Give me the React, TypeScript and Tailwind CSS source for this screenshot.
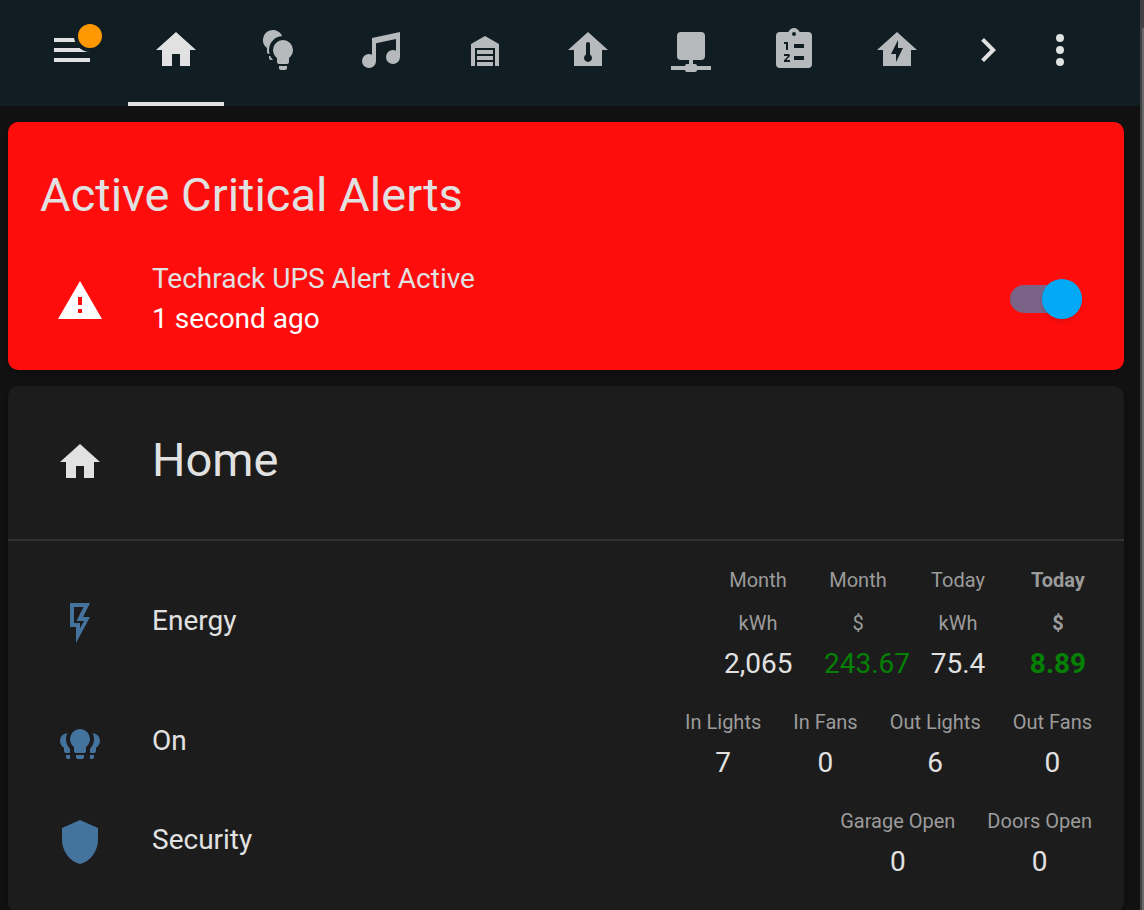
import { useState } from "react";

const icons = {
  menu: "M3,6H21V8H3V6M3,11H21V13H3V11M3,16H21V18H3V16Z",
  home: "M10,20V14H14V20H19V12H22L12,3L2,12H5V20H10Z",
  bulbs:
    "M13.59,5.01A7,7 0 0,0 7,12C7,12.7 7.1,13.4 7.3,14H7C6.4,14 6,13.6 6,13V11A5,5 0 0,1 9,2C11,2 12.8,3.2 13.59,5.01ZM7,15H7.6C8,15.9 8.5,16.4 9,17H8A1,1 0 0,1 7,16ZM14,7A5,5 0 0,1 19,12C19,13.64 18.2,15.1 17,16V18A1,1 0 0,1 16,19H12A1,1 0 0,1 11,18V16C9.8,15.1 9,13.6 9,12A5,5 0 0,1 14,7ZM16,21V20H12V21A1,1 0 0,0 13,22H15A1,1 0 0,0 16,21Z",
  music:
    "M21,3V15.5A3.5,3.5 0 0,1 17.5,19A3.5,3.5 0 0,1 14,15.5A3.5,3.5 0 0,1 17.5,12C18.04,12 18.55,12.12 19,12.34V6.47L9,8.6V17.5A3.5,3.5 0 0,1 5.5,21A3.5,3.5 0 0,1 2,17.5A3.5,3.5 0 0,1 5.5,14C6.04,14 6.55,14.12 7,14.34V6L21,3Z",
  garage:
    "M19,20H17V11H7V20H5V9L12,5L19,9V20M8,12H16V14H8V12M8,15H16V17H8V15M16,18V20H8V18H16Z",
  climate:
    "M12,3L2,12H5V20H19V12H22L12,3ZM12,8A1,1 0 0,1 13,9V14.27A2,2 0 1,1 11,14.27V9A1,1 0 0,1 12,8Z",
  network:
    "M17,3A2,2 0 0,1 19,5V15A2,2 0 0,1 17,17H13V19H14A1,1 0 0,1 15,20H22V22H15A1,1 0 0,1 14,23H10A1,1 0 0,1 9,22H2V20H9A1,1 0 0,1 10,19H11V17H7A2,2 0 0,1 5,15V5A2,2 0 0,1 7,3H17Z",
  clipboard:
    "M19,3H14.82C14.4,1.84 13.3,1 12,1C10.7,1 9.6,1.84 9.18,3H5A2,2 0 0,0 3,5V19A2,2 0 0,0 5,21H19A2,2 0 0,0 21,19V5A2,2 0 0,0 19,3ZM12,3A1,1 0 0,1 13,4A1,1 0 0,1 12,5A1,1 0 0,1 11,4A1,1 0 0,1 12,3ZM7,8H9V12H8V9H7V8ZM10,17V18H7V17.08L9,15H7V14H9.25A0.75,0.75 0 0,1 10,14.75C10,14.95 9.92,15.14 9.79,15.27L8.12,17H10ZM12,9H17V11H12ZM12,15H17V17H12Z",
  power: "M12,3L2,12H5V20H19V12H22L12,3ZM11.5,18V14H9L12.5,7V11H15L11.5,18Z",
  chevron: "M8.59,16.58L13.17,12L8.59,7.41L10,6L16,12L10,18L8.59,16.58Z",
  dots: "M12,16A2,2 0 0,1 14,18A2,2 0 0,1 12,20A2,2 0 0,1 10,18A2,2 0 0,1 12,16M12,10A2,2 0 0,1 14,12A2,2 0 0,1 12,14A2,2 0 0,1 10,12A2,2 0 0,1 12,10M12,4A2,2 0 0,1 14,6A2,2 0 0,1 12,8A2,2 0 0,1 10,6A2,2 0 0,1 12,4Z",
  alert: "M13,14H11V10H13M13,18H11V16H13M1,21H23L12,2L1,21Z",
  flash:
    "M7,2H17L13.5,9H17L10,22V14H7V2M9,4V12H12V14.66L14,11H10.24L13.76,4H9Z",
  bulbGroup:
    "M12,5A5,5 0 0,1 17,10C17,11.64 16.2,13.1 15,14V16A1,1 0 0,1 14,17H10A1,1 0 0,1 9,16V14C7.8,13.1 7,11.6 7,10A5,5 0 0,1 12,5ZM14,19V18H10V19A1,1 0 0,0 11,20H13A1,1 0 0,0 14,19ZM5.7,7.1C5.2,8 5,9 5,10C5,11.9 5.8,13.7 7,14.9V17H5A1,1 0 0,1 4,16V14.4C2.8,13.6 2,12.4 2,11C2,8.9 3.6,7.1 5.7,7.1ZM7,18H5V19A1,1 0 0,0 6,20H7ZM18.3,7.1C18.8,8 19,9 19,10C19,11.9 18.2,13.7 17,14.9V17H19A1,1 0 0,0 20,16V14.4C21.2,13.6 22,12.4 22,11C22,8.9 20.4,7.1 18.3,7.1ZM17,18H19V19A1,1 0 0,1 18,20H17Z",
  shield:
    "M12,1L3,5V11C3,16.55 6.84,21.74 12,23C17.16,21.74 21,16.55 21,11V5L12,1Z",
};

type IconName = keyof typeof icons;

function Icon({ name }: { name: IconName }) {
  return (
    <svg viewBox="0 0 24 24" className="size-12 shrink-0" fill="currentColor" fillRule="evenodd" aria-hidden="true">
      <path d={icons[name]} />
    </svg>
  );
}

const tabs: { icon: IconName; label: string }[] = [
  { icon: "home", label: "Home" },
  { icon: "bulbs", label: "Lights" },
  { icon: "music", label: "Music" },
  { icon: "garage", label: "Garage" },
  { icon: "climate", label: "Climate" },
  { icon: "network", label: "Network" },
  { icon: "clipboard", label: "Lists" },
  { icon: "power", label: "Power" },
];

interface Stat {
  label: string;
  value: string;
  green?: boolean;
  bold?: boolean;
}

const rows: { icon: IconName; name: string; narrow?: boolean; stats: Stat[] }[] = [
  {
    icon: "flash",
    name: "Energy",
    narrow: true,
    stats: [
      { label: "Month kWh", value: "2,065" },
      { label: "Month $", value: "243.67", green: true },
      { label: "Today kWh", value: "75.4" },
      { label: "Today $", value: "8.89", green: true, bold: true },
    ],
  },
  {
    icon: "bulbGroup",
    name: "On",
    stats: [
      { label: "In Lights", value: "7" },
      { label: "In Fans", value: "0" },
      { label: "Out Lights", value: "6" },
      { label: "Out Fans", value: "0" },
    ],
  },
  {
    icon: "shield",
    name: "Security",
    stats: [
      { label: "Garage Open", value: "0" },
      { label: "Doors Open", value: "0" },
    ],
  },
];

function Header() {
  const [active, setActive] = useState(0);
  return (
    <header className="flex h-[106px] shrink-0 items-stretch bg-[#101e24] pr-8 text-[#e1e1e1]">
      <button type="button" aria-label="Menu" className="flex w-32 shrink-0 items-start pt-[26px] pl-12">
        <span className="relative">
          <Icon name="menu" />
          <span className="absolute -top-1.5 left-[26px] size-8 rounded-full border-4 border-[#101e24] bg-[#ff9800]" />
        </span>
      </button>
      <nav role="tablist" aria-label="Views" className="flex min-w-0 flex-1 gap-[7px] overflow-hidden">
        {tabs.map((tab, i) => (
          <button
            key={tab.label}
            type="button"
            role="tab"
            aria-label={tab.label}
            aria-selected={i === active}
            onClick={() => setActive(i)}
            className={`flex w-24 shrink-0 justify-center border-b-4 pt-[26px] ${
              i === active ? "border-[#e1e1e1] text-[#e1e1e1]" : "border-transparent text-[#b6babc]"
            }`}
          >
            <Icon name={tab.icon} />
          </button>
        ))}
      </nav>
      <button type="button" aria-label="Next views" className="flex w-12 shrink-0 justify-center pt-[26px]">
        <Icon name="chevron" />
      </button>
      <button type="button" aria-label="More options" className="flex w-24 shrink-0 justify-center pt-[26px]">
        <Icon name="dots" />
      </button>
    </header>
  );
}

function AlertCard() {
  const [on, setOn] = useState(true);
  return (
    <section className="rounded-[10px] bg-[#ff0d0d] pt-[45px] pb-[31px] shadow-md">
      <h1 className="px-8 text-[47px] leading-14 text-[#e1e1e1]">Active Critical Alerts</h1>
      <div className="mt-9 flex items-center gap-12 pr-[42px] pl-12">
        <span className="pt-1 text-white">
          <Icon name="alert" />
        </span>
        <label htmlFor="ups-alert" className="flex-1 text-[28px] leading-10 text-[#e1e1e1]">
          Techrack UPS Alert Active
          <span className="block text-white">1 second ago</span>
        </label>
        <input
          id="ups-alert"
          type="checkbox"
          role="switch"
          checked={on}
          onChange={(e) => setOn(e.target.checked)}
          className="flex h-7 w-[72px] shrink-0 appearance-none items-center rounded-full bg-[#9b9b9b] before:size-10 before:shrink-0 before:rounded-full before:bg-white before:shadow-md checked:justify-end checked:bg-[#7b6388] checked:before:bg-[#03a9f4]"
        />
      </div>
    </section>
  );
}

function HomeCard() {
  return (
    <section className="rounded-[10px] bg-[#1c1c1c] pb-8 text-[#e1e1e1] shadow-md">
      <div className="flex h-[155px] items-center gap-12 border-b-2 border-[#333333] pb-0.5 pl-12">
        <Icon name="home" />
        <h2 className="pb-1 text-[47px] leading-14">Home</h2>
      </div>
      <div className="flex flex-col gap-[19px] pt-[18px]">
        {rows.map((row) => (
          <div key={row.name} className="flex items-center gap-12 pr-8 pl-12">
            <span className="pt-1 text-[#44739e]">
              <Icon name={row.icon} />
            </span>
            <h3 className="flex-1 text-[28px] leading-10">{row.name}</h3>
            <dl className="flex gap-8 text-center">
              {row.stats.map((stat) => (
                <div
                  key={stat.label}
                  className={`${row.narrow ? "w-[68px]" : "whitespace-nowrap"} ${stat.bold ? "font-bold" : ""}`}
                >
                  <dt className="text-xl leading-[43px] text-[#9b9b9b]">{stat.label}</dt>
                  <dd className={`text-[28px] leading-[37px] ${stat.green ? "text-[#058005]" : ""}`}>{stat.value}</dd>
                </div>
              ))}
            </dl>
          </div>
        ))}
      </div>
    </section>
  );
}

export default function App() {
  return (
    <div className="flex h-screen overflow-hidden bg-[#111111] font-[Roboto,sans-serif]">
      <div className="flex min-w-0 flex-1 flex-col">
        <Header />
        <main className="flex flex-col gap-4 pt-4 pr-4 pl-2">
          <AlertCard />
          <HomeCard />
        </main>
      </div>
      <div className="w-1 shrink-0 bg-[#424242] pt-7 pl-0.5">
        <div className="h-full bg-[#686868]" />
      </div>
    </div>
  );
}
